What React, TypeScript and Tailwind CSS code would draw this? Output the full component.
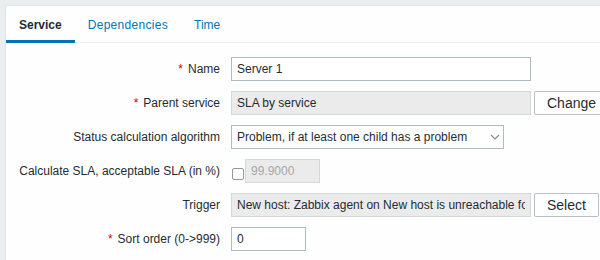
import React from "react";

const font = { fontFamily: '"Liberation Sans", Arial, sans-serif' };

function Label({ text, req }: { text: string; req?: boolean }) {
  return (
    <div className="w-[214px] shrink-0 text-right text-[12px] leading-[14px] text-[#1f2c33] whitespace-nowrap">
      {req && <span className="text-[#d40000] mr-[5px]">*</span>}
      {text}
    </div>
  );
}

function Row({ children }: { children: React.ReactNode }) {
  return <div className="flex items-center h-[24px] gap-[11px]">{children}</div>;
}

function Btn({ text }: { text: string }) {
  return (
    <div className="shrink-0 ml-[3px] h-[24px] px-[12px] flex items-center border border-[#b4c1c9] rounded-[2px] bg-white text-[14px] text-[#1f2c33] whitespace-nowrap">
      {text}
    </div>
  );
}

export default function App() {
  return (
    <div style={font} className="w-[600px] h-[260px] overflow-hidden bg-[#ebeef0] pl-[5px] pt-[5px]">
      <div className="w-[640px] h-[300px] bg-[#fefefe] border-l border-t border-[#dfe4e7]">
        <div className="flex h-[37px] border-b border-[#ebeef0] text-[12px] leading-[14px]">
          <div className="px-[13px] pt-[12px] pb-[8px] border-b-[3px] border-[#0275b8] font-bold text-[#1f2c33] h-[37px] box-border">
            Service
          </div>
          <div className="px-[13px] pt-[12px] text-[#0275b8] tracking-[0.3px]">Dependencies</div>
          <div className="px-[13px] pt-[12px] text-[#0275b8]">Time</div>
        </div>
        <div className="pt-[14px] flex flex-col gap-[10px]">
          <Row>
            <Label text="Name" req />
            <div className="w-[300px] h-[24px] shrink-0 border border-[#acbbc4] bg-white px-[5px] flex items-center text-[12px] text-[#1f2c33]">
              Server 1
            </div>
          </Row>
          <Row>
            <Label text="Parent service" req />
            <div className="flex items-center shrink-0">
              <div className="w-[300px] h-[24px] border border-[#d3d8db] bg-[#ebebeb] px-[5px] flex items-center text-[12px] text-[#1f2c33]">
                SLA by service
              </div>
              <Btn text="Change" />
            </div>
          </Row>
          <Row>
            <Label text="Status calculation algorithm" />
            <div className="relative w-[273px] h-[24px] shrink-0 border border-[#acbbc4] bg-white pl-[5px] flex items-center text-[12px] text-[#1f2c33]">
              Problem, if at least one child has a problem
              <svg className="absolute right-[3px] top-[8px]" width="10" height="6" viewBox="0 0 10 6">
                <path d="M1 1 L5 5 L9 1" fill="none" stroke="#768d99" strokeWidth="1.1" />
              </svg>
            </div>
          </Row>
          <Row>
            <Label text="Calculate SLA, acceptable SLA (in %)" />
            <div className="flex items-end shrink-0 h-[24px]">
              <div className="w-[12px] h-[12px] ml-[1px] mb-[3px] border border-[#8e9aa0] rounded-[2px] bg-white" />
              <div className="ml-[1px] w-[75px] h-[24px] border border-[#d3d8db] bg-[#ebebeb] px-[5px] flex items-center text-[12px] text-[#a3a8ab]">
                99.9000
              </div>
            </div>
          </Row>
          <Row>
            <Label text="Trigger" />
            <div className="flex items-center shrink-0">
              <div className="w-[300px] h-[24px] border border-[#d3d8db] bg-[#ebebeb] pl-[5px] pr-[5px] flex items-center text-[12px] text-[#1f2c33]">
                <span className="block w-full overflow-hidden whitespace-nowrap">
                  New host: Zabbix agent on New host is unreachable for 5 minutes
                </span>
              </div>
              <Btn text="Select" />
            </div>
          </Row>
          <Row>
            <Label text="Sort order (0->999)" req />
            <div className="w-[75px] h-[24px] shrink-0 border border-[#acbbc4] bg-white px-[5px] flex items-center text-[12px] text-[#1f2c33]">
              0
            </div>
          </Row>
        </div>
      </div>
    </div>
  );
}
